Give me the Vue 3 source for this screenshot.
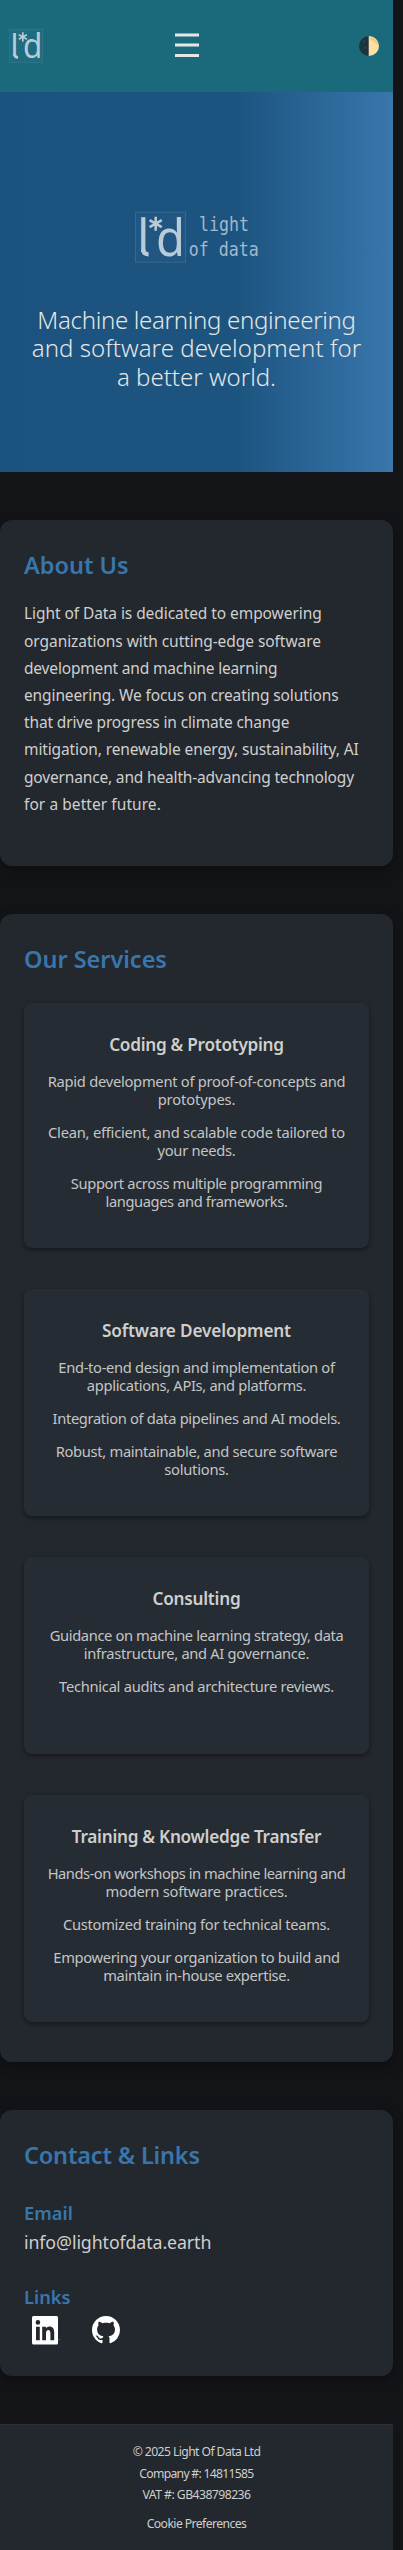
<script setup>
// Tightens or loosens the tracking of a single line so that it fills a given measure.
const vFit = {
  mounted(el, { value }) {
    const count = el.textContent.length
    const natural = el.getBoundingClientRect().width
    el.style.letterSpacing = `${(value + 1.6 - natural) / count}px`
  },
}

const about = [
  ['Light of Data is dedicated to empowering', 296],
  ['organizations with cutting-edge software', 295.3],
  ['development and machine learning', 251.7],
  ['engineering. We focus on creating solutions', 313],
  ['that drive progress in climate change', 263.7],
  ['mitigation, renewable energy, sustainability, AI', 333],
  ['governance, and health-advancing technology', 328.3],
  ['for a better future.', 135.3],
]

const services = [
  {
    title: ['Coding & Prototyping', 173],
    items: [
      [['Rapid development of proof-of-concepts and', 296], ['prototypes.', 76]],
      [['Clean, efficient, and scalable code tailored to', 295.3], ['your needs.', 76.3]],
      [['Support across multiple programming', 249.7], ['languages and frameworks.', 180.3]],
    ],
  },
  {
    title: ['Software Development', 187.3],
    items: [
      [['End-to-end design and implementation of', 274.7], ['applications, APIs, and platforms.', 217.7]],
      [['Integration of data pipelines and AI models.', 286.3]],
      [['Robust, maintainable, and secure software', 280], ['solutions.', 63]],
    ],
  },
  {
    title: ['Consulting', 86.3],
    items: [
      [['Guidance on machine learning strategy, data', 292], ['infrastructure, and AI governance.', 223.7]],
      [['Technical audits and architecture reviews.', 273.3]],
    ],
  },
  {
    title: ['Training & Knowledge Transfer', 247.7],
    items: [
      [['Hands-on workshops in machine learning and', 296], ['modern software practices.', 180.3]],
      [['Customized training for technical teams.', 265.3]],
      [['Empowering your organization to build and', 284.7], ['maintain in-house expertise.', 185]],
    ],
  },
]

const company = [
  ['© 2025 Light Of Data Ltd', 126],
  ['Company #: 14811585', 112.7],
  ['VAT #: GB438798236', 106.3],
]
</script>

<template>
  <div class="page">
    <header class="bar">
      <svg class="mark" width="36" height="36" viewBox="-1.5 -1.5 54 54">
        <rect class="frame" x="0.5" y="0.5" width="50" height="50" />
        <g class="ink">
          <text x="2.2" y="40" font-size="46">l</text>
          <path d="M8.3 37.5Q8.3 42.6 13.6 42.6" />
          <text x="21" y="44" font-size="51" textLength="29" lengthAdjust="spacingAndGlyphs">d</text>
          <path class="star" d="M20.7 5V19M14.6 8.5L26.8 15.5M26.8 8.5L14.6 15.5" />
        </g>
      </svg>
      <svg class="menu" width="24" height="25" viewBox="0 0 24 25">
        <path d="M0 2H24M0 12H24M0 22.5H24" stroke="#e6e6e4" stroke-width="3.2" />
      </svg>
      <svg class="moon" width="20" height="20" viewBox="0 0 20 20">
        <path d="M10 0A10 10 0 0 0 10 20Z" fill="#1f333e" />
        <path d="M10 0A10 10 0 0 1 10 20Z" fill="#fce0a2" />
        <path d="M11 1L15 2.3L18.5 6L18.8 9L16 7L15 5L12 4.5Z" fill="#f2c583" />
        <path d="M3 5L6 4L5 8ZM5 11L8 10L7 14ZM2 11L4 14L3 14Z" fill="#2b424c" />
        <path d="M10 0V20" stroke="#e9d9b0" stroke-width=".6" />
      </svg>
    </header>

    <section class="hero">
      <svg class="brand" width="129" height="60" viewBox="132 207 129 60">
        <g transform="translate(135 211.7)">
          <rect class="frame" x="0.5" y="0.5" width="50" height="50" />
          <g class="ink">
            <text x="2.2" y="40" font-size="46">l</text>
            <path d="M8.3 37.5Q8.3 42.6 13.6 42.6" />
            <text x="21" y="44" font-size="51" textLength="29" lengthAdjust="spacingAndGlyphs">d</text>
            <path class="star" d="M20.7 5V19M14.6 8.5L26.8 15.5M26.8 8.5L14.6 15.5" />
          </g>
        </g>
        <g class="word">
          <text x="199" y="231" textLength="50" lengthAdjust="spacingAndGlyphs">light</text>
          <text x="188.8" y="255.5" textLength="70" lengthAdjust="spacingAndGlyphs">of data</text>
        </g>
      </svg>
      <p class="tagline">
        <span v-fit="316.7">Machine learning engineering</span><br />
        <span v-fit="327.7">and software development for</span><br />
        <span v-fit="157.3">a better world.</span>
      </p>
    </section>

    <section class="panel about">
      <h2><span v-fit="103">About Us</span></h2>
      <p>
        <template v-for="[text, width] in about" :key="text"><span v-fit="width">{{ text }}</span><br /></template>
      </p>
    </section>

    <section class="panel services">
      <h2><span v-fit="141.3">Our Services</span></h2>
      <div class="cards">
        <article v-for="service in services" :key="service.title[0]" class="card">
          <h3><span v-fit="service.title[1]">{{ service.title[0] }}</span></h3>
          <p v-for="lines in service.items" :key="lines[0][0]">
            <template v-for="[text, width] in lines" :key="text"><span v-fit="width">{{ text }}</span><br /></template>
          </p>
        </article>
      </div>
    </section>

    <section class="panel contact">
      <h2><span v-fit="174.3">Contact &amp; Links</span></h2>
      <h3><span v-fit="47.3">Email</span></h3>
      <p><span v-fit="185.7">info@lightofdata.earth</span></p>
      <h3><span v-fit="45">Links</span></h3>
      <div class="social">
        <svg width="28" height="28.5" viewBox="0 0 28 28.5">
          <path
            fill="#fff"
            fill-rule="evenodd"
            d="M1.5 0H24.5Q26 0 26 1.5V27Q26 28.5 24.5 28.5H1.5Q0 28.5 0 27V1.5Q0 0 1.5 0ZM4 10.8V24.3H7.8V10.8ZM5.9 4.1A2.3 2.3 0 1 0 5.9 8.7A2.3 2.3 0 1 0 5.9 4.1ZM10.2 10.8V24.3H14V17.5C14 15.2 14.8 14 16.3 14C17.8 14 18.4 15.2 18.4 17.5V24.3H22.2V16.7C22.2 12.5 20.7 10.4 17.6 10.4C15.8 10.4 14.6 11.3 13.9 12.5V10.8Z"
          />
          <circle cx="27.1" cy="23.5" r=".5" fill="#8d9093" />
        </svg>
        <svg width="28" height="28" viewBox="0 0 16 16">
          <path
            fill="#fff"
            d="M8 0C3.58 0 0 3.58 0 8c0 3.54 2.29 6.53 5.47 7.59.4.07.55-.17.55-.38 0-.19-.01-.82-.01-1.49-2.01.37-2.53-.49-2.69-.94-.09-.23-.48-.94-.82-1.13-.28-.15-.68-.52-.01-.53.63-.01 1.08.58 1.23.82.72 1.21 1.87.87 2.33.66.07-.52.28-.87.51-1.07-1.78-.2-3.64-.89-3.64-3.95 0-.87.31-1.59.82-2.15-.08-.2-.36-1.02.08-2.12 0 0 .67-.21 2.2.82.64-.18 1.32-.27 2-.27s1.36.09 2 .27c1.53-1.04 2.2-.82 2.2-.82.44 1.1.16 1.92.08 2.12.51.56.82 1.27.82 2.15 0 3.07-1.87 3.75-3.65 3.95.29.25.54.73.54 1.48 0 1.07-.01 1.93-.01 2.2 0 .21.15.46.55.38A8.01 8.01 0 0 0 16 8c0-4.42-3.58-8-8-8z"
          />
        </svg>
      </div>
    </section>

    <footer class="foot">
      <p v-for="[text, width] in company" :key="text"><span v-fit="width">{{ text }}</span></p>
      <p class="cookies"><span v-fit="98">Cookie Preferences</span></p>
    </footer>
  </div>
</template>

<style>
body {
  background: #121417;
}
</style>

<style scoped>
.page {
  width: 393px;
  height: 2550px;
  font-family: "Noto Sans", "Open Sans", sans-serif;
  color: #cfcfcd;
}
h2,
h3,
p {
  margin: 0;
  font-weight: 400;
}
span {
  white-space: nowrap;
}
.bar {
  box-sizing: border-box;
  height: 92px;
  padding: 0 14px 0 7.5px;
  display: flex;
  align-items: center;
  justify-content: space-between;
  background: #1a6a7c;
}
.mark,
.brand {
  overflow: visible;
}
.menu {
  margin: 0 0 1px -29px;
}
.frame {
  fill: rgba(255, 255, 255, 0.02);
  stroke: rgba(150, 190, 210, 0.2);
}
.ink {
  fill: #b9cbd8;
  stroke: none;
}
.ink path {
  fill: none;
  stroke: #b9cbd8;
  stroke-width: 4.2;
}
.ink .star {
  stroke-width: 2.5;
}
.word {
  fill: #a2b9cc;
  font: 19px "DejaVu Sans Mono", monospace;
}
.hero {
  box-sizing: border-box;
  height: 380px;
  padding-top: 115px;
  text-align: center;
  background: linear-gradient(90deg, #1c527f 0%, #1c547f 60%, #2c6799 82%, #3876ac 100%);
}
.brand {
  display: block;
  margin: 0 auto 39px;
}
.tagline {
  font-size: 24px;
  font-weight: 300;
  line-height: 28.4px;
  color: #e6e6e4;
}
.panel {
  box-sizing: border-box;
  margin-top: 48px;
  padding: 30px 24px 0;
  border-radius: 12px;
  background: #23272e;
  box-shadow: 0 4px 12px rgba(0, 0, 0, 0.3);
}
.panel h2 {
  font-size: 23.5px;
  line-height: 30px;
  font-weight: 600;
  color: #3876ac;
}
.about {
  height: 346px;
}
.about p {
  margin-top: 20.4px;
  font-size: 15.5px;
  line-height: 27.2px;
}
.services {
  height: 1148px;
}
.cards {
  display: flex;
  flex-direction: column;
  gap: 40.3px;
  margin-top: 28.6px;
}
.card {
  box-sizing: border-box;
  min-height: 197.5px;
  padding: 30.6px 0 38.6px;
  border-radius: 8px;
  text-align: center;
  background: #262c33;
  box-shadow: 0 2px 4px rgba(0, 0, 0, 0.4);
}
.card h3 {
  margin-bottom: 15px;
  font-size: 17.2px;
  line-height: 24px;
  font-weight: 600;
}
.card p {
  font-size: 14.7px;
  line-height: 18px;
  color: #c4c5c5;
}
.card p + p {
  margin-top: 14.8px;
}
.contact {
  height: 266px;
}
.contact h3 {
  margin-top: 30.8px;
  font-size: 18.3px;
  line-height: 24px;
  font-weight: 600;
  color: #3876ac;
}
.contact p {
  margin-top: 5.3px;
  font-size: 17.8px;
  line-height: 24px;
}
.social {
  display: flex;
  gap: 32px;
  margin: 7.2px 0 0 8px;
}
.foot {
  box-sizing: border-box;
  height: 126px;
  margin-top: 48px;
  padding-top: 16.4px;
  border-top: 1px solid #2c2f33;
  text-align: center;
  font-size: 12.2px;
  line-height: 21.4px;
  background: #23272e;
}
.cookies {
  margin-top: 7.8px;
}
</style>
